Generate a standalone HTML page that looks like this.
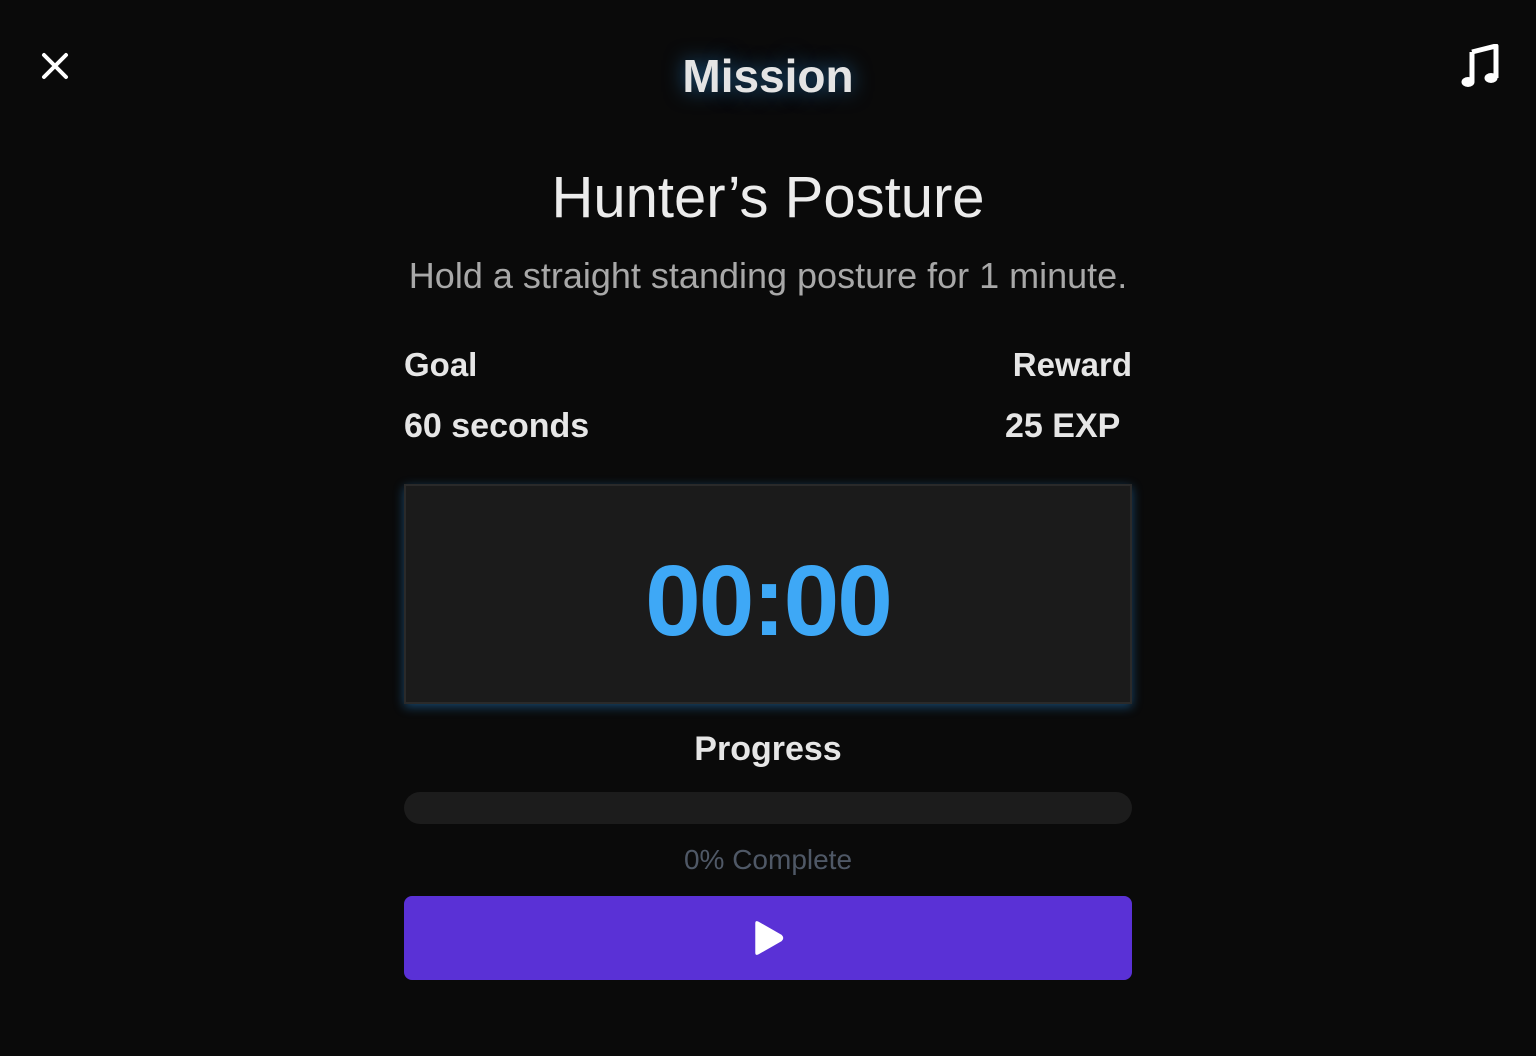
<!DOCTYPE html>
<html><head><meta charset="utf-8"><style>
html,body{margin:0;padding:0;background:#0a0a0a;width:1536px;height:1056px;overflow:hidden;font-family:"Liberation Sans",sans-serif;color:#e6e6e6}
.a{position:absolute;white-space:nowrap;line-height:1}
.c{left:0;width:1536px;text-align:center}
</style></head><body>
<svg class="a" style="left:40px;top:51px" width="30" height="30" viewBox="0 0 30 30"><path d="M4 4L26 26M26 4L4 26" stroke="#fff" stroke-width="4" stroke-linecap="round"/></svg>
<svg class="a" style="left:1460px;top:44px" width="40" height="44" viewBox="0 0 40 44"><path d="M12 8L36 2V34" stroke="#fff" stroke-width="5" fill="none" stroke-linejoin="round"/><path d="M12 8V38" stroke="#fff" stroke-width="5"/><ellipse cx="8" cy="38" rx="6.5" ry="5" fill="#fff"/><ellipse cx="31" cy="34" rx="6.5" ry="5" fill="#fff"/></svg>
<div class="a c" style="top:53px;font-size:46px;font-weight:bold;color:#e4e4e4;text-shadow:0 0 20px rgba(40,140,220,.6)">Mission</div>
<div class="a c" style="top:169px;font-size:58px;color:#ececec">Hunter’s Posture</div>
<div class="a c" style="top:258px;font-size:36px;color:#a8a8a8">Hold a straight standing posture for 1 minute.</div>
<div class="a" style="left:404px;top:348px;font-size:33px;font-weight:bold">Goal</div>
<div class="a" style="left:404px;top:409px;font-size:34px;font-weight:bold">60 seconds</div>
<div class="a" style="right:404px;top:348px;font-size:33px;font-weight:bold">Reward</div>
<div class="a" style="left:1005px;top:409px;font-size:34px;font-weight:bold">25 EXP</div>
<div class="a" style="left:404px;top:484px;width:724px;height:216px;background:#1b1b1b;border:2px solid #2a2a2a;box-shadow:0 3px 10px rgba(40,140,220,.45)"></div>
<div class="a c" style="top:551px;font-size:100px;font-weight:bold;color:#3ea8f6;letter-spacing:-2px">00:00</div>
<div class="a c" style="top:732px;font-size:34px;font-weight:bold">Progress</div>
<div class="a" style="left:404px;top:792px;width:728px;height:32px;border-radius:16px;background:#1c1c1c"></div>
<div class="a c" style="top:846px;font-size:28px;color:#4f5866">0% Complete</div>
<div class="a" style="left:404px;top:896px;width:728px;height:84px;border-radius:8px;background:#5a31d6"></div>
<svg class="a" style="left:751px;top:919px" width="36" height="38" viewBox="0 0 34 36"><path d="M4 4Q4 1 7 2.5L29 15Q32 18 29 21L7 33.5Q4 35 4 32Z" fill="#fff"/></svg>
</body></html>
